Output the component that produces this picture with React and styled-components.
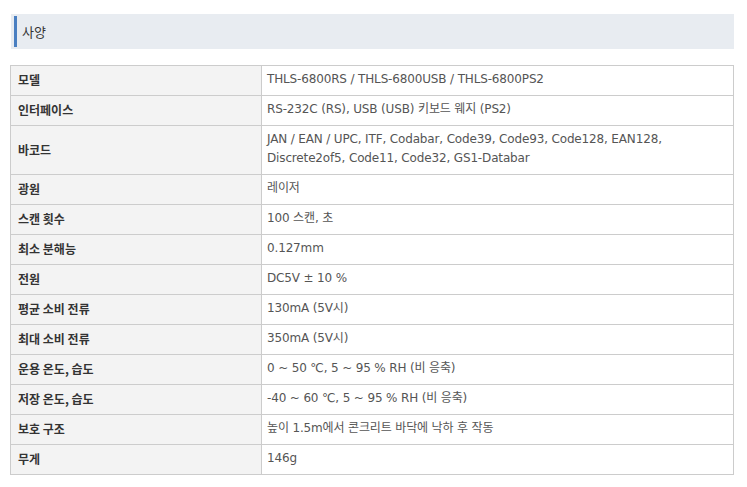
import styled, { createGlobalStyle } from 'styled-components';

const GlobalStyle = createGlobalStyle`
  body {
    margin: 0;
    background: #ffffff;
    font-family: Tahoma, "DejaVu Sans", "Noto Sans CJK KR", sans-serif;
  }
`;

const specs = [
  { label: '모델', value: 'THLS-6800RS / THLS-6800USB / THLS-6800PS2' },
  { label: '인터페이스', value: 'RS-232C (RS), USB (USB) 키보드 웨지 (PS2)' },
  {
    label: '바코드',
    value:
      'JAN / EAN / UPC, ITF, Codabar, Code39, Code93, Code128, EAN128, Discrete2of5, Code11, Code32, GS1-Databar',
  },
  { label: '광원', value: '레이저' },
  { label: '스캔 횟수', value: '100 스캔, 초' },
  { label: '최소 분해능', value: '0.127mm' },
  { label: '전원', value: 'DC5V ± 10 %' },
  { label: '평균 소비 전류', value: '130mA (5V시)' },
  { label: '최대 소비 전류', value: '350mA (5V시)' },
  { label: '운용 온도, 습도', value: '0 ~ 50 ℃, 5 ~ 95 % RH (비 응축)' },
  { label: '저장 온도, 습도', value: '-40 ~ 60 ℃, 5 ~ 95 % RH (비 응축)' },
  { label: '보호 구조', value: '높이 1.5m에서 콘크리트 바닥에 낙하 후 작동' },
  { label: '무게', value: '146g' },
];

const Page = styled.div`
  padding: 14px 13px 0 11px;
  width: 723px;
`;

const SectionTitle = styled.h3`
  display: flex;
  align-items: center;
  height: 35px;
  margin: 0;
  padding: 2px 0;
  box-sizing: border-box;
  background: #e8ecf1;
  font-size: 13px;
  font-weight: normal;
  color: #333333;
  font-family: "Noto Sans CJK KR", sans-serif;

  &::before {
    content: '';
    align-self: stretch;
    width: 3px;
    margin: 0 5px 0 3px;
    background: #4a7fc1;
  }
`;

const SpecTable = styled.table`
  margin: 16px 0 0 -1px;
  width: 724px;
  border-collapse: collapse;
  border: 1px solid #cccccc;
  font-size: 12px;
`;

const LabelCell = styled.th`
  width: 236px;
  padding: 4px 7px 6px;
  line-height: 19px;
  text-align: left;
  vertical-align: middle;
  background: #f3f3f3;
  border: 1px solid #cccccc;
  color: #333333;
  font-weight: bold;
  font-family: "Noto Sans CJK KR", sans-serif;
`;

const ValueCell = styled.td`
  padding: 4px 6px 6px 5px;
  line-height: 19px;
  letter-spacing: -0.15px;
  vertical-align: middle;
  border: 1px solid #cccccc;
  color: #555555;
`;

export default function App() {
  return (
    <>
      <GlobalStyle />
      <Page>
        <SectionTitle>사양</SectionTitle>
        <SpecTable>
          <tbody>
            {specs.map((row) => (
              <tr key={row.label}>
                <LabelCell>{row.label}</LabelCell>
                <ValueCell>{row.value}</ValueCell>
              </tr>
            ))}
          </tbody>
        </SpecTable>
      </Page>
    </>
  );
}
